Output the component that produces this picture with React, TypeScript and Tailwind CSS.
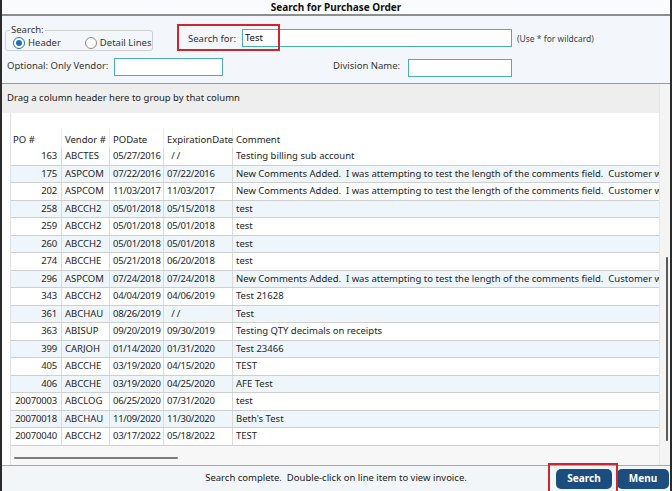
import React from "react";

const LONG =
  "New Comments Added.  I was attempting to test the length of the comments field.  Customer would like to see more text here";

const rows: [string, string, string, string, string][] = [
  ["163", "ABCTES", "05/27/2016", "  / /", "Testing billing sub account"],
  ["175", "ASPCOM", "07/22/2016", "07/22/2016", LONG],
  ["202", "ASPCOM", "11/03/2017", "11/03/2017", LONG],
  ["258", "ABCCH2", "05/01/2018", "05/15/2018", "test"],
  ["259", "ABCCH2", "05/01/2018", "05/01/2018", "test"],
  ["260", "ABCCH2", "05/01/2018", "05/01/2018", "test"],
  ["274", "ABCCHE", "05/21/2018", "06/20/2018", "test"],
  ["296", "ASPCOM", "07/24/2018", "07/24/2018", LONG],
  ["343", "ABCCH2", "04/04/2019", "04/06/2019", "Test 21628"],
  ["361", "ABCHAU", "08/26/2019", "  / /", "Test"],
  ["363", "ABISUP", "09/20/2019", "09/30/2019", "Testing QTY decimals on receipts"],
  ["399", "CARJOH", "01/14/2020", "01/31/2020", "Test 23466"],
  ["405", "ABCCHE", "03/19/2020", "04/15/2020", "TEST"],
  ["406", "ABCCHE", "03/19/2020", "04/25/2020", "AFE Test"],
  ["20070003", "ABCLOG", "06/25/2020", "07/31/2020", "test"],
  ["20070018", "ABCHAU", "11/09/2020", "11/30/2020", "Beth's Test"],
  ["20070040", "ABCCH2", "03/17/2022", "05/18/2022", "TEST"],
];

export default function App() {
  return (
    <div className="w-[672px] h-[491px] flex flex-col overflow-hidden border-x-2 border-[#2b2b2b] bg-white text-[9.5px] text-[#1e1e1e] font-['Noto_Sans',sans-serif]">
      {/* Title */}
      <div className="h-[16px] shrink-0 bg-[#f9fbfd] border-b-2 border-[#8e8e8e] text-center font-bold leading-[14px] text-[10px] text-[#111]">
        Search for Purchase Order
      </div>

      {/* Header panel */}
      <div className="relative h-[68px] shrink-0 bg-[#f3f7fb] border-b border-[#9a9a9a] pt-[8px]">
        <div className="flex items-start h-[28px]">
          <fieldset className="ml-[3px] w-[148px] h-[27px] border border-[#cfcfcf] rounded-[3px]">
            <legend className="ml-[4px] px-[1px] leading-[12px] text-[#333]">Search:</legend>
            <div className="flex items-center h-[14px] pl-[7px] whitespace-nowrap">
              <span className="shrink-0 w-[12px] h-[12px] rounded-full border border-[#1f6fbf] bg-white flex items-center justify-center">
                <span className="w-[6px] h-[6px] rounded-full bg-[#1f6fbf]" />
              </span>
              <span className="ml-[3px] text-[#333]">Header</span>
              <span className="shrink-0 ml-[24px] w-[12px] h-[12px] rounded-full border border-[#8a8a8a] bg-white" />
              <span className="ml-[3px] text-[#333]">Detail Lines</span>
            </div>
          </fieldset>
          <span className="ml-[35px] w-[54px] mt-[8px] leading-[14px] text-[#333] whitespace-nowrap">Search for:</span>
          <div className="mt-[5px] w-[270px] h-[18px] border border-[#49b0b0] bg-white pl-[2px] leading-[16px] text-[#111]">
            Test
          </div>
          <span className="ml-[5px] mt-[9px] text-[8.5px] leading-[12px] text-[#444] whitespace-nowrap">(Use * for wildcard)</span>
        </div>
        <div className="flex items-center h-[19px] mt-[5px] whitespace-nowrap">
          <span className="ml-[5px] w-[107px] text-[#333]">Optional: Only Vendor:</span>
          <div className="w-[109px] h-[18px] border border-[#49b0b0] bg-white" />
          <span className="ml-[110px] w-[75px] text-[#333]">Division Name:</span>
          <div className="w-[104px] h-[18px] border border-[#49b0b0] bg-white mt-[2px]" />
        </div>
        {/* highlight annotation */}
        <div className="absolute left-[175px] top-[8px] w-[103px] h-[27px] border-2 border-[#c8282e]" />
      </div>

      {/* Middle area */}
      <div className="flex flex-1 min-h-0">
        <div className="flex flex-col w-[657px]">
          <div className="h-[29px] shrink-0 bg-[#efeeee] flex items-center pl-[5px] text-[#222]">
            Drag a column header here to group by that column
          </div>
          <div className="flex-1 bg-white pl-[8px] flex flex-col">
            <div className="flex-1 border-l border-[#e2e2e2] flex flex-col">
              <div className="h-[15px] shrink-0" />
              <div className="grid grid-cols-[51px_48px_54px_69px_1fr] h-[20px] shrink-0 items-end text-[#222] whitespace-nowrap">
                <div className="h-[20px] border-r border-[#ececec] pl-[2px] pt-[5px]">PO #</div>
                <div className="h-[20px] border-r border-[#ececec] pl-[3px] pt-[5px]">Vendor #</div>
                <div className="h-[20px] border-r border-[#ececec] pl-[3px] pt-[5px]">PODate</div>
                <div className="h-[20px] border-r border-[#ececec] pl-[3px] pt-[5px]">ExpirationDate</div>
                <div className="h-[20px] pl-[3px] pt-[5px]">Comment</div>
              </div>
              {rows.map((r, i) => (
                <div
                  key={r[0]}
                  className={
                    "grid grid-cols-[51px_48px_54px_69px_1fr] h-[17.5px] shrink-0 border-b border-[#cfcfcf] leading-[16px] " +
                    (i % 2 === 1 ? "bg-[#eef5fb]" : "bg-white")
                  }
                >
                  <div className="border-r border-[#dadada] text-right pr-[4px] tracking-[-0.2px]">{r[0]}</div>
                  <div className="border-r border-[#dadada] pl-[3px] whitespace-nowrap overflow-hidden">{r[1]}</div>
                  <div className="border-r border-[#dadada] pl-[3px] whitespace-nowrap tracking-[-0.3px]">{r[2]}</div>
                  <div className="border-r border-[#dadada] pl-[3px] whitespace-pre tracking-[-0.3px]">{r[3]}</div>
                  <div className="pl-[3px] whitespace-pre overflow-hidden">{r[4]}</div>
                </div>
              ))}
              <div className="flex-1 bg-[#f7f7f7] flex flex-col pl-[3px] pt-[11px]">
                <div className="w-[164px] h-[2px] bg-[#7d7d7d] rounded-full" />
              </div>
            </div>
          </div>
        </div>
        {/* vertical scrollbar */}
        <div className="w-[11px] bg-[#f4f4f4] border-l border-[#e6e6e6] flex flex-col pl-[6px] pt-[173px]">
          <div className="w-[2px] h-[184px] bg-[#5a5a5a] rounded-full" />
        </div>
      </div>

      {/* Status bar */}
      <div className="h-[26px] shrink-0 border-t border-[#a9a9a9] bg-[#f3f6f9] grid grid-cols-[1fr_auto_1fr] items-center">
        <div />
        <div className="text-[#222] whitespace-pre">Search complete.  Double-click on line item to view invoice.</div>
        <div className="flex justify-end items-center gap-[5px] pr-[1px]">
          <div className="relative">
            <button className="w-[56px] h-[20px] rounded-[5px] bg-[#1b4d7e] text-white font-bold text-[10px]">
              Search
            </button>
            <div className="absolute left-[-8px] right-[-6px] top-[-6px] bottom-[-5px] border-2 border-[#c8282e]" />
          </div>
          <button className="w-[52px] h-[20px] rounded-[5px] bg-[#1b4d7e] text-white font-bold text-[10px]">
            Menu
          </button>
        </div>
      </div>
    </div>
  );
}
